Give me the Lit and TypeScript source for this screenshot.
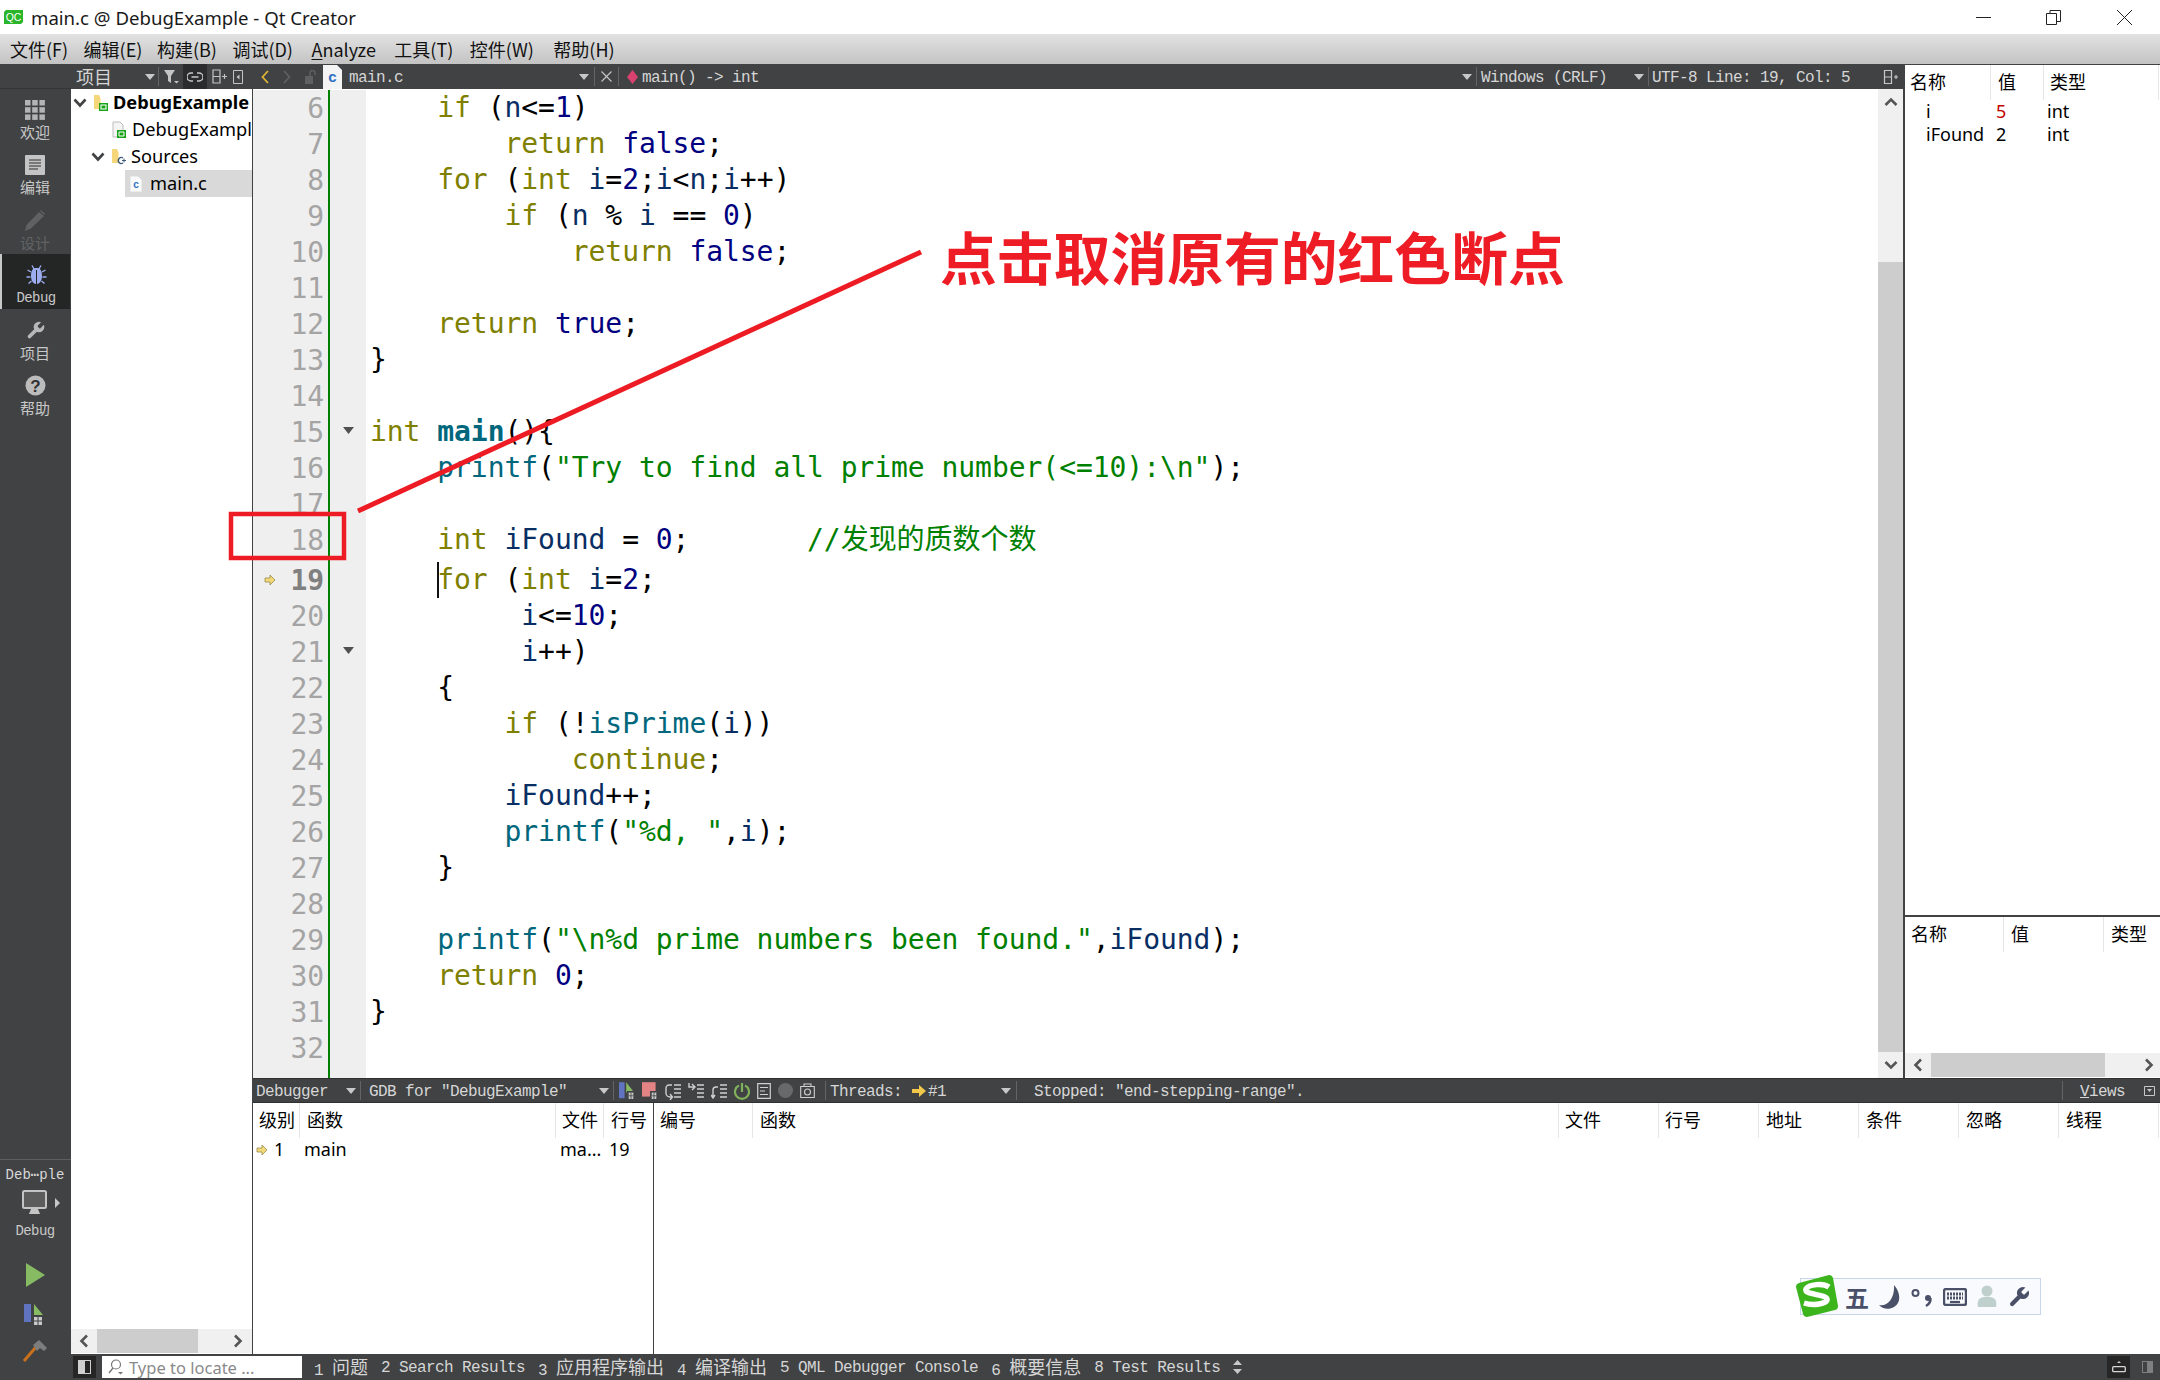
import { LitElement, html, svg, css } from "lit";
import { customElement } from "lit/decorators.js";

const CODE: [number, string][] = [
  [6, "    {k|if} ({v|n}<={n|1})"],
  [7, "        {k|return} {n|false};"],
  [8, "    {k|for} ({k|int} {v|i}={n|2};{v|i}<{v|n};{v|i}++)"],
  [9, "        {k|if} ({v|n} % {v|i} == {n|0})"],
  [10, "            {k|return} {n|false};"],
  [11, ""],
  [12, "    {k|return} {n|true};"],
  [13, "}"],
  [14, ""],
  [15, "{k|int} {b|main}(){"],
  [16, "    {f|printf}({s|\"Try to find all prime number(<=10):\\n\"});"],
  [17, ""],
  [18, "    {k|int} {v|iFound} = {n|0};       {s|//发现的质数个数}"],
  [19, "    {k|for} ({k|int} {v|i}={n|2};"],
  [20, "         {v|i}<={n|10};"],
  [21, "         {v|i}++)"],
  [22, "    {"],
  [23, "        {k|if} (!{f|isPrime}({v|i}))"],
  [24, "            {k|continue};"],
  [25, "        {v|iFound}++;"],
  [26, "        {f|printf}({s|\"%d, \"},{v|i});"],
  [27, "    }"],
  [28, ""],
  [29, "    {f|printf}({s|\"\\n%d prime numbers been found.\"},{v|iFound});"],
  [30, "    {k|return} {n|0};"],
  [31, "}"],
  [32, ""],
];

const tokens = (src: string) => {
  const out: unknown[] = [];
  const re = /\{(\w)\|([^}]*)\}/g;
  let last = 0;
  let m: RegExpExecArray | null;
  while ((m = re.exec(src))) {
    if (m.index > last) out.push(src.slice(last, m.index));
    out.push(html`<span class="t-${m[1]}">${m[2]}</span>`);
    last = m.index + m[0].length;
  }
  if (last < src.length) out.push(src.slice(last));
  return out;
};

/* Mixed Latin / CJK label: the CJK runs are set larger than the Latin ones. */
const ui = (text: string) =>
  text.split(/([\u3400-\u9fff]+)/).map((part, i) => (i % 2 ? html`<span class="cjk">${part}</span>` : part));

const ddArrow = html`<svg class="dd" width="10" height="6" viewBox="0 0 10 6"><path d="M0 0h10L5 6z" fill="#c8c8c8"/></svg>`;
const chevDown = html`<svg class="chev" width="14" height="10" viewBox="0 0 14 10"><path d="M1.5 1.5 7 7.5l5.5-6" fill="none" stroke="#404244" stroke-width="2.6"/></svg>`;
const splitIcon = html`<svg width="16" height="16" viewBox="0 0 16 16"><path d="M1.5 1.5h7v13h-7zM1.5 8h7M11 8h4M13 6v4" fill="none" stroke="#c8c8c8" stroke-width="1.2"/></svg>`;
const arrowL = html`<svg width="10" height="14" viewBox="0 0 10 14"><path d="M8 1.5 2.5 7 8 12.5" fill="none" stroke="#555" stroke-width="2.6"/></svg>`;
const arrowR = html`<svg width="10" height="14" viewBox="0 0 10 14"><path d="M2 1.5 7.5 7 2 12.5" fill="none" stroke="#555" stroke-width="2.6"/></svg>`;
const yellowArrow = html`<svg width="12" height="12" viewBox="0 0 12 12"><path d="M1 4h5V1l5 5-5 5V8H1z" fill="#f2d878" stroke="#9a8a4a" stroke-width=".8"/></svg>`;
const bugMini = svg`<path d="M10 11h10v11H10z" fill="#404244"/><path d="M12 13h6v8h-6z" fill="#c9c9c9"/><path d="M15 13v8M10 14l2 1.500M20 14l-2 1.500M10 21l2-1.500M20 21l-2-1.500M12 17h6" stroke="#404244" stroke-width="1"/>`;

@customElement("app-root")
export class AppRoot extends LitElement {
  static styles = css`
    :host {
      display: block;
      position: relative;
      width: 2160px;
      height: 1380px;
      overflow: hidden;
      background: #fff;
      font-family: "Noto Sans", "Noto Sans CJK SC", sans-serif;
      color: #000;
    }
    .app { display: flex; flex-direction: column; height: 1380px; }
    svg { display: block; flex: none; }

    /* title + menu */
    .title { height: 34px; flex: none; display: flex; align-items: center; background: #fff; font-size: 18.600px; color: #1a1a1a; }
    .title .qc { margin: 0 8px 0 4px; }
    .title .grow { flex: 1; }
    .title .win { width: 70px; display: flex; justify-content: center; }
    .title .win.last { width: 72px; }
    .menu {
      height: 30px; flex: none; display: flex; align-items: center; padding-left: 10px;
      background: linear-gradient(#e2e2e2, #c3c3c3);
      font-family: "Noto Sans CJK SC", "Noto Sans", sans-serif; font-size: 18px; color: #111;
    }
    .menu span { margin-right: 16.500px; }
    .menu span:nth-child(1) { margin-right: 15.500px; }
    .menu span:nth-child(2) { margin-right: 14.500px; }
    .menu span:nth-child(3) { margin-right: 15.500px; }
    .menu span:nth-child(4) { margin-right: 18.500px; }
    .menu span:nth-child(5) { margin-right: 18.500px; }
    .menu span:nth-child(7) { margin-right: 19.500px; }
    .menu u { text-underline-offset: 2px; }

    .body { flex: 1; display: flex; min-height: 0; }

    /* left mode bar */
    .nav {
      width: 71px; flex: none; background: #404244; display: flex; flex-direction: column;
      color: #c8c8c8; font-family: "Noto Sans CJK SC", sans-serif; font-size: 15px;
    }
    .nav-head { height: 24px; flex: none; border-bottom: 1px solid #323436; }
    .mode { height: 55px; flex: none; display: flex; flex-direction: column; align-items: center; padding: 11px 1px 0 0; box-sizing: border-box; gap: 1px; line-height: 21px; }
    .mode.active { background: #242626; border-left: 2px solid #c8c8c8; border-right: 1px solid #404244; padding-right: 0; gap: 3px; }
    .mode.off { color: #606264; }
    .mono-l { font-family: "Liberation Mono", monospace; font-size: 14px; letter-spacing: -0.6px; }
    .grow { flex: 1; }
    .kit { height: 221px; flex: none; border-top: 1px solid #5c5e60; display: flex; flex-direction: column; align-items: center; box-sizing: border-box; padding-right: 1px; }
    .kit-name { margin-top: 6px; line-height: 18px; color: #d8d8d8; letter-spacing: 0; }
    .kit-mon { display: flex; align-items: center; margin-top: 6px; padding-left: 11px; gap: 8px; }
    .kit-label { margin-top: 7px; line-height: 18px; }
    .kit-play { margin-top: 23px; }
    .kit-dbg { margin-top: 16px; }
    .kit-ham { margin-top: 14px; }

    .content { flex: 1; min-width: 0; display: flex; flex-direction: column; }
    .work { flex: 1; display: flex; min-height: 0; }

    /* shared toolbars */
    .bar {
      display: flex; align-items: center; flex: none; height: 25px; background: #404244; color: #d6d6d6;
      font-family: "Liberation Mono", monospace; font-size: 16px; letter-spacing: -0.6px; white-space: pre;
    }
    .bar > span, .seg > span { padding-top: 2px; }
    .cjk { font-family: "Noto Sans CJK SC", sans-serif; font-size: 18px; letter-spacing: 0; vertical-align: 1px; line-height: 20px; }
    .seg > .cjk { padding-top: 0; margin-bottom: 2px; }
    .sep { width: 1px; height: 19px; background: #626466; flex: none; }
    .seg { display: flex; align-items: center; height: 100%; box-sizing: border-box; flex: none; }
    .seg .dd { margin-left: auto; }

    /* project tree */
    .tree-col { width: 182px; flex: none; display: flex; flex-direction: column; border-right: 1px solid #404244; box-sizing: border-box; }
    .tree-head { padding-left: 5px; }
    .tree-head .s1 { width: 82px; padding-right: 3px; }
    .tree-head .f { margin-left: 5px; }
    .tree-head .link { width: 24px; height: 25px; margin-left: 4px; background: #2b2c2e; display: flex; align-items: center; justify-content: center; }
    .tree-head .sp { margin-left: 5px; }
    .tree-head .cl { margin-left: 6px; }
    .tree { flex: 1; font-size: 18.200px; line-height: 27px; overflow: hidden; white-space: nowrap; }
    .node { height: 27px; display: flex; align-items: center; overflow: hidden; }
    .node.l0 { padding-left: 2px; font-weight: 700; }
    .node.l1 { padding-left: 41px; }
    .node.l1b { padding-left: 20px; }
    .node.sel { margin-left: 54px; padding-left: 5px; background: #d9d9d9; }
    .node.sel .ico { margin-right: 8px; }
    .node .ico { margin-right: 5px; }
    .node .chev { margin-right: 6px; }

    .hbar { height: 24px; flex: none; background: #f0f0f0; display: flex; align-items: center; margin-bottom: 1px; }
    .hbar .btn { flex: none; display: flex; align-items: center; justify-content: center; height: 100%; }
    .hbar .thumb { flex: none; height: 100%; background: #cdcdcd; }
    .hbar .end { flex: 1; display: flex; justify-content: flex-end; }
    .tree-sb .btn { width: 26px; }
    .tree-sb .thumb { width: 101px; }
    .tree-sb .end { padding-right: 9px; }

    /* editor */
    .main { flex: 1; min-width: 0; display: flex; flex-direction: column; }
    .upper { height: 1014px; flex: none; display: flex; }
    .editor { width: 1650px; flex: none; display: flex; flex-direction: column; }
    .ed-bar .doc { width: 341px; padding: 0 5px 0 8px; }
    .ed-bar .next { margin-left: 14px; }
    .ed-bar .lock { margin-left: 14px; }
    .ed-bar .file { margin-left: 6px; }
    .ed-bar .name { margin-left: 7px; }
    .ed-bar .x { width: 23px; justify-content: center; }
    .ed-bar .sym { width: 857px; padding: 0 4px 0 8px; }
    .ed-bar .sym .txt { margin-left: 4px; }
    .ed-bar .eol { width: 171px; padding: 0 4px 0 4px; }
    .ed-bar .enc { flex: 1; padding: 0 4px 0 3px; }
    .ed-bar .enc svg { margin-left: auto; }
    .ed-body { flex: 1; display: flex; min-height: 0; }
    .lines {
      flex: 1; min-width: 0; display: flex; flex-direction: column; overflow: hidden; padding-top: 1px;
      font-family: "DejaVu Sans Mono", "Noto Sans CJK SC", monospace; font-size: 28px; letter-spacing: -0.05px;
    }
    .line { height: 36px; flex: none; display: flex; align-items: center; white-space: pre; }
    .line.tall { height: 40px; }
    .line.tall .src { margin-bottom: 4px; }
    .line.tall .gut .num { margin-bottom: 4px; }
    .line.filler { flex: 1; height: auto; align-items: stretch; }
    .gut { width: 75px; height: 100%; flex: none; display: flex; align-items: center; background: #efefef; box-sizing: border-box; padding: 0 4px 0 11px; color: #a4a4a4; }
    .gut .mark { width: 12px; flex: none; }
    .gut .num { flex: 1; text-align: right; }
    .gut.cur { color: #808080; font-weight: 700; }
    .green { width: 2px; height: 100%; flex: none; background: #008000; }
    .fold { width: 36px; height: 100%; flex: none; background: #efefef; display: flex; align-items: center; justify-content: center; }
    .fold svg { margin-top: -4px; }
    .src { padding-left: 4px; position: relative; line-height: 36px; height: 36px; }
    .caret { position: absolute; left: 71px; top: 0; width: 2px; height: 36px; background: #111; }
    .t-k { color: #808000; }
    .t-v { color: #092e64; }
    .t-n { color: #000080; }
    .t-s { color: #008000; }
    .t-f { color: #00677c; }
    .t-b { color: #00677c; font-weight: 700; }

    .vbar { width: 25px; flex: none; display: flex; flex-direction: column; background: #f0f0f0; }
    .vbar .btn { height: 26px; flex: none; display: flex; align-items: center; justify-content: center; }
    .vbar .track { height: 147px; flex: none; }
    .vbar .thumb { flex: 1; background: #cdcdcd; }

    /* right locals panel */
    .vars { flex: 1; min-width: 0; display: flex; flex-direction: column; border-left: 2px solid #404244; border-top: 1px solid #404244; box-sizing: border-box; }
    .vars .top { height: 850px; flex: none; }
    .vars .bot { flex: 1; display: flex; flex-direction: column; border-top: 2px solid #404244; }
    .vars .bot .grow { flex: 1; }
    .vars-sb .btn { width: 26px; }
    .vars-sb .thumb { width: 174px; }
    .vars-sb .end { padding-right: 6px; }

    .thead { display: flex; height: 35px; font-family: "Noto Sans CJK SC", sans-serif; font-size: 18px; line-height: 33px; }
    .th { flex: none; box-sizing: border-box; padding-left: 5px; border-right: 1px solid #e6e6e6; height: 100%; }
    .th.none { border-right: 0; }
    .row { display: flex; height: 23px; font-size: 18px; line-height: 23px; white-space: nowrap; }
    .td { flex: none; box-sizing: border-box; display: flex; align-items: center; }
    .red { color: #c00000; }
    .lvl { margin-left: 6px; }

    /* debugger pane */
    .debug { flex: 1; min-height: 0; display: flex; flex-direction: column; }
    .db-bar { border-top: 1px solid #2e2f31; border-bottom: 1px solid #2e2f31; height: 25px; box-sizing: border-box; }
    .db-bar .a { width: 107px; padding: 0 4px 0 3px; }
    .db-bar .b { width: 252px; padding: 0 4px 0 8px; }
    .db-bar .icons { width: 211px; padding-left: 5px; gap: 7px; }
    .db-bar .c { width: 190px; padding: 0 5px 0 4px; gap: 0; }
    .db-bar .c svg:first-of-type { margin: 0 2px 0 1px; }
    .db-bar .d { flex: 1; padding-left: 17px; }
    .db-bar .e { width: 97px; padding: 0 5px 0 17px; justify-content: space-between; }
    .db-body { flex: 1; display: flex; min-height: 0; }
    .stack { width: 401px; flex: none; border-right: 1px solid #404244; box-sizing: border-box; }
    .breaks { flex: 1; min-width: 0; }

    /* status */
    .status { height: 26px; flex: none; padding-left: 2px; gap: 13px; }
    .status .tg { width: 23px; height: 22px; background: #262626; display: flex; align-items: center; justify-content: center; margin-right: -7px; }
    .status .loc {
      width: 200px; height: 22px; background: #fff; color: #8a8a8a; display: flex; align-items: center; gap: 6px; padding-left: 6px; box-sizing: border-box; margin-right: -1px;
      font-family: "Noto Sans", sans-serif; font-size: 16.500px; letter-spacing: 0;
    }
    .status .rt { margin-left: auto; display: flex; align-items: center; gap: 12px; padding-right: 7px; }
    .status .box { width: 23px; height: 22px; background: #262626; display: flex; align-items: center; justify-content: center; }

    /* annotation & IME overlay */
    .over { position: absolute; left: 0; top: 0; pointer-events: none; }
    .callout {
      position: absolute; left: 940px; top: 218px; line-height: 74px; white-space: nowrap;
      font-family: "Noto Sans CJK SC", sans-serif; font-weight: 700; font-size: 56.800px; color: #ee1c25;
    }
    .ime {
      position: absolute; left: 1800px; top: 1278px; width: 241px; height: 37px; box-sizing: border-box;
      background: #f8fafd; border: 1.500px solid #c8d6e8; display: flex; align-items: center; gap: 10px; padding-left: 44px;
      font-family: "Noto Sans CJK SC", sans-serif; font-size: 24px; font-weight: 700; color: #4b5069;
    }
    .ime .logo { position: absolute; left: -6px; top: -5px; }
    .ime .ch { width: 24px; line-height: 30px; text-align: center; }
  `;

  private table(cols: [string, number, number][]) {
    return html`<div class="thead">
      ${cols.map(
        ([t, w, p], i) => html`<div class="th ${i === cols.length - 1 && w < 100 ? "none" : ""}" style="width:${w}px;padding-left:${p}px">${t}</div>`
      )}
    </div>`;
  }

  private cells(cols: [unknown, number, number][], cls = "") {
    return html`<div class="row ${cls}">
      ${cols.map(([t, w, p]) => html`<div class="td" style="width:${w}px;padding-left:${p}px">${t}</div>`)}
    </div>`;
  }

  private folder(kind: "qt" | "cpp") {
    return html`<svg class="ico" width="15" height="18" viewBox="0 0 15 18">
      <path d="M1 1h5l1 2v12H1z" fill="#f6d67a"/>
      <path d="M7 4h1v11H7z" fill="#fbeab5"/>
      ${kind === "qt"
        ? svg`<rect x="6" y="9" width="9" height="8" fill="#19a319"/><path d="M8 11h5v4H8z" fill="none" stroke="#fff" stroke-width="1.100"/>`
        : svg`<path d="M12 10a3 3 0 1 0 0 5" fill="none" stroke="#3c5a78" stroke-width="1.400"/><path d="M11 12.500h4M13 10.500v4" stroke="#3c5a78"/>`}
    </svg>`;
  }

  private renderNav() {
    return html`<nav class="nav">
      <div class="nav-head"></div>
      <div class="mode">
        <svg width="20" height="20" viewBox="0 0 20 20" fill="#b4b4b4">
          <rect width="5.500" height="5.500"/><rect x="7.200" width="5.500" height="5.500"/><rect x="14.400" width="5.500" height="5.500"/>
          <rect y="7.200" width="5.500" height="5.500"/><rect x="7.200" y="7.200" width="5.500" height="5.500"/><rect x="14.400" y="7.200" width="5.500" height="5.500"/>
          <rect y="14.400" width="5.500" height="5.500"/><rect x="7.200" y="14.400" width="5.500" height="5.500"/><rect x="14.400" y="14.400" width="5.500" height="5.500"/>
        </svg>
        <span>欢迎</span>
      </div>
      <div class="mode">
        <svg width="20" height="20" viewBox="0 0 20 20"><rect width="20" height="20" rx="1" fill="#c4c4c4"/><path d="M4 5h12M4 8h12M4 11h12M4 14h9" stroke="#2e2e2e" stroke-width="1.200"/></svg>
        <span>编辑</span>
      </div>
      <div class="mode off">
        <svg width="20" height="21" viewBox="0 0 20 21"><path d="M0 21l1.500-6L14 2l5 4L6 18.500z" fill="#5f6163"/><path d="M15 1l1-1 4 4-1 1z" fill="#5f6163"/></svg>
        <span>设计</span>
      </div>
      <div class="mode active">
        <svg width="21" height="20" viewBox="0 0 21 20">
          <path d="M10 3C6 3 5 7 5 11s2 8 5 8zM11 3c4 0 5 4 5 8s-2 8-5 8z" fill="#9dacee"/>
          <path d="M7.500 3 6 .5M13.500 3 15 .5M5 7 1.500 5M16 7l3.500-2M4.500 12H.5M16.500 12h4M5.500 16l-3 2.500M15.500 16l3 2.500" stroke="#9dacee" stroke-width="1.400" fill="none"/>
          <path d="M7 3h7v2H7z" fill="#9dacee"/>
        </svg>
        <span class="mono-l">Debug</span>
      </div>
      <div class="mode">
        <svg width="21" height="21" viewBox="0 0 24 24"><path fill="#b8b8b8" d="M14.700 6.300a1 1 0 0 0 0 1.400l1.600 1.600a1 1 0 0 0 1.400 0l3.770-3.770a6 6 0 0 1-7.940 7.940l-6.910 6.910a2.120 2.120 0 0 1-3-3l6.910-6.910a6 6 0 0 1 7.940-7.940l-3.760 3.760z"/></svg>
        <span>项目</span>
      </div>
      <div class="mode">
        <svg width="21" height="21" viewBox="0 0 21 21"><circle cx="10.500" cy="10.500" r="10" fill="#bcbcbc"/><text x="10.500" y="16.500" text-anchor="middle" font-family="Liberation Sans" font-weight="700" font-size="17" fill="#333">?</text></svg>
        <span>帮助</span>
      </div>
      <div class="grow"></div>
      <div class="kit">
        <div class="kit-name mono-l">Deb⋯ple</div>
        <div class="kit-mon">
          <svg width="25" height="25" viewBox="0 0 25 25"><rect x="1" y="1" width="23" height="17" rx="1.500" fill="#5c5c5c" stroke="#c4c4c4" stroke-width="2"/><path d="M9 19h7l2 5H7z" fill="#c4c4c4"/></svg>
          <svg width="5" height="10" viewBox="0 0 5 10"><path d="M0 0l5 5-5 5z" fill="#c8c8c8"/></svg>
        </div>
        <div class="kit-label mono-l">Debug</div>
        <svg class="kit-play" width="19" height="24" viewBox="0 0 19 24"><path d="M0 0l19 12L0 24z" fill="#86bb63"/></svg>
        <svg class="kit-dbg" width="22" height="23" viewBox="0 0 22 23">
          <rect x="0" y="1" width="7" height="18" fill="#5f73c0"/><path d="M10 1l9 11h-9z" fill="#86bb63"/>
          <path d="M8 13h12v9H8z" fill="#404244"/><path d="M10 14h8v8h-8z" fill="#c9c9c9"/><path d="M14 14v8M10 18h8M8 14l2 2M20 14l-2 2M8 22l2-2M20 22l-2-2" stroke="#404244" stroke-width="1" fill="none"/>
        </svg>
        <svg class="kit-ham" width="24" height="22" viewBox="0 0 24 22"><path d="M1 21 13 7" stroke="#c9701c" stroke-width="3"/><path d="M10 5l6-5 8 8-3 3-4-3-3 3z" fill="#7d7d7d"/></svg>
      </div>
    </nav>`;
  }

  private renderTree() {
    return html`<aside class="tree-col">
      <div class="bar tree-head">
        <div class="seg s1"><span class="cjk">项目</span>${ddArrow}</div>
        <div class="sep"></div>
        <svg class="f" width="15" height="15" viewBox="0 0 15 15"><path d="M0 1h11L7 7v7L4 12V7z" fill="#c4c4c4"/><path d="M10 12h5l-2.500 2.500z" fill="#c4c4c4"/></svg>
        <div class="link">
          <svg width="16" height="10" viewBox="0 0 16 10"><path d="M6 1H4a4 4 0 0 0 0 8h2M10 1h2a4 4 0 0 1 0 8h-2M4.500 5h7" fill="none" stroke="#c8c8c8" stroke-width="1.400"/></svg>
        </div>
        <svg class="sp" width="15" height="15" viewBox="0 0 15 15"><path d="M1 1h7v13H1zM1 7.500h7M10 7.500h5M12.500 5v5" fill="none" stroke="#c4c4c4" stroke-width="1.200"/></svg>
        <svg class="cl" width="10" height="14" viewBox="0 0 10 14"><path d="M.5.500h9v13h-9z" fill="none" stroke="#c4c4c4"/><path d="M6.500 4.500v5L3.500 7z" fill="#c4c4c4"/></svg>
      </div>
      <div class="tree">
        <div class="node l0">${chevDown}${this.folder("qt")}<span>DebugExample</span></div>
        <div class="node l1">
          <svg class="ico" width="15" height="18" viewBox="0 0 15 18"><path d="M1 1h7l3 3v12H1z" fill="#f4f4f4" stroke="#bdbdbd"/><rect x="5" y="9" width="9" height="8" fill="#19a319"/><path d="M7 11h5v4H7z" fill="none" stroke="#fff"/></svg>
          <span>DebugExampl</span>
        </div>
        <div class="node l1b">${chevDown}${this.folder("cpp")}<span>Sources</span></div>
        <div class="node sel">
          <svg class="ico" width="12" height="18" viewBox="0 0 12 18"><path d="M0 1h8l4 4v12H0z" fill="#fbfbfb" stroke="#dcdcdc"/><text x="6" y="13" text-anchor="middle" font-family="Liberation Sans" font-size="10" font-weight="700" fill="#2f72c4">c</text></svg>
          <span>main.c</span>
        </div>
      </div>
      <div class="hbar tree-sb">
        <div class="btn">${arrowL}</div>
        <div class="thumb"></div>
        <div class="end">${arrowR}</div>
      </div>
    </aside>`;
  }

  private renderEditor() {
    return html`<section class="editor">
      <div class="bar ed-bar">
        <div class="seg doc">
          <svg width="8" height="14" viewBox="0 0 8 14"><path d="M7 1 1.500 7 7 13" fill="none" stroke="#e0b434" stroke-width="1.800"/></svg>
          <svg class="next" width="8" height="14" viewBox="0 0 8 14"><path d="M1 1l5.500 6L1 13" fill="none" stroke="#5e6062" stroke-width="1.800"/></svg>
          <svg class="lock" width="12" height="14" viewBox="0 0 12 14"><path d="M0 6h8v8H0z" fill="#5e6062"/><path d="M5 6V3a2.500 2.500 0 0 1 5 0v2" fill="none" stroke="#5e6062" stroke-width="1.500"/></svg>
          <svg class="file" width="19" height="24" viewBox="0 0 19 24"><path d="M0 0h14l5 5v19H0z" fill="#f4f4f4"/><text x="9" y="17" text-anchor="middle" font-family="Liberation Sans" font-size="15" font-weight="700" fill="#2f72c4">c</text></svg>
          <span class="name">main.c</span>
          ${ddArrow}
        </div>
        <div class="sep"></div>
        <div class="seg x"><svg width="11" height="11" viewBox="0 0 11 11"><path d="M.5.500l10 10M10.500.500l-10 10" stroke="#c8c8c8" stroke-width="1.100"/></svg></div>
        <div class="sep"></div>
        <div class="seg sym">
          <svg width="11" height="14" viewBox="0 0 11 14"><path d="M5.500 0 11 7l-5.500 7L0 7z" fill="#d9426f"/></svg>
          <span class="txt">main() -&gt; int</span>
          ${ddArrow}
        </div>
        <div class="sep"></div>
        <div class="seg eol"><span>Windows (CRLF)</span>${ddArrow}</div>
        <div class="sep"></div>
        <div class="seg enc"><span>UTF-8 Line: 19, Col: 5</span>${splitIcon}</div>
      </div>
      <div class="ed-body">
        <div class="lines">
          ${CODE.map(
            ([n, src]) => html`<div class="line ${n === 18 ? "tall" : ""}">
              <div class="gut ${n === 19 ? "cur" : ""}">
                <span class="mark">${n === 19 ? yellowArrow : ""}</span>
                <span class="num">${n}</span>
              </div>
              <div class="green"></div>
              <div class="fold">
                ${n === 15 || n === 21
                  ? html`<svg width="11" height="7" viewBox="0 0 11 7"><path d="M0 0h11L5.500 7z" fill="#505050"/></svg>`
                  : ""}
              </div>
              <div class="src">${n === 19 ? html`<i class="caret"></i>` : ""}${tokens(src)}</div>
            </div>`
          )}
          <div class="line filler"><div class="gut"></div><div class="green"></div><div class="fold"></div></div>
        </div>
        <div class="vbar">
          <div class="btn"><svg width="14" height="10" viewBox="0 0 14 10"><path d="M1.500 8 7 2.500 12.500 8" fill="none" stroke="#555" stroke-width="2.600"/></svg></div>
          <div class="track"></div>
          <div class="thumb"></div>
          <div class="btn"><svg width="14" height="10" viewBox="0 0 14 10"><path d="M1.500 2 7 7.500 12.500 2" fill="none" stroke="#555" stroke-width="2.600"/></svg></div>
        </div>
      </div>
    </section>`;
  }

  private renderVars() {
    return html`<section class="vars">
      <div class="top">
        ${this.table([["名称", 86, 5], ["值", 53, 7], ["类型", 115, 6]])}
        ${this.cells([["i", 86, 21], [html`<span class="red">5</span>`, 53, 5], ["int", 115, 3]])}
        ${this.cells([["iFound", 86, 21], ["2", 53, 5], ["int", 115, 3]])}
      </div>
      <div class="bot">
        ${this.table([["名称", 99, 6], ["值", 100, 7], ["类型", 55, 7]])}
        <div class="grow"></div>
        <div class="hbar vars-sb">
          <div class="btn">${arrowL}</div>
          <div class="thumb"></div>
          <div class="end">${arrowR}</div>
        </div>
      </div>
    </section>`;
  }

  private renderDebug() {
    return html`<section class="debug">
      <div class="bar db-bar">
        <div class="seg a"><span>Debugger</span>${ddArrow}</div>
        <div class="sep"></div>
        <div class="seg b"><span>GDB for "DebugExample"</span>${ddArrow}</div>
        <div class="sep"></div>
        <div class="seg icons">
          <svg width="16" height="18" viewBox="0 0 20 22"><rect y="0" width="7" height="20" fill="#5f73c0"/><path d="M9 0l10 13H9z" fill="#86bb63"/>${bugMini}</svg>
          <svg width="16" height="18" viewBox="0 0 20 22"><rect width="17" height="18" fill="#e58484"/>${bugMini}</svg>
          <svg width="16" height="18" viewBox="0 0 16 18"><path d="M7 3H4a3 3 0 0 0-3 3v5a4 4 0 0 0 4 4h2M5 12l2.500 3L5 18M9 3h7M9 7h7M9 11h7M9 15h7" fill="none" stroke="#cfcfcf" stroke-width="1.400"/></svg>
          <svg width="16" height="18" viewBox="0 0 16 18"><path d="M1 1v4h5M4 2l3 3-3 3M9 3h7M9 7h7M9 11h7M9 15h7" fill="none" stroke="#cfcfcf" stroke-width="1.400"/></svg>
          <svg width="16" height="18" viewBox="0 0 16 18"><path d="M7 5H5a3 3 0 0 0-3 3v8M0 13l2 3 2-3M9 3h7M9 7h7M9 11h7M9 15h7" fill="none" stroke="#cfcfcf" stroke-width="1.400"/></svg>
          <svg width="16" height="18" viewBox="0 0 16 18"><path d="M5 3.500a7 7 0 1 0 6 0" fill="none" stroke="#7fb25a" stroke-width="2.200"/><path d="M8 1v9" stroke="#7fb25a" stroke-width="2.200"/></svg>
          <svg width="14" height="16" viewBox="0 0 14 16"><path d="M.7.700h12.600v14.600H.7zM3 4.500h8M3 8h5M3 11.500h8" fill="none" stroke="#cfcfcf" stroke-width="1.200"/></svg>
          <svg width="15" height="15" viewBox="0 0 15 15"><circle cx="7.500" cy="7.500" r="7.500" fill="#68696b"/></svg>
          <svg width="15" height="15" viewBox="0 0 15 15"><path d="M.7 3.500h13.600v11H.7zM4 3.500V1h7v2.500" fill="none" stroke="#cfcfcf" stroke-width="1.100"/><circle cx="7.500" cy="9" r="3" fill="none" stroke="#cfcfcf" stroke-width="1.100"/></svg>
        </div>
        <div class="sep"></div>
        <div class="seg c"><span>Threads: </span><svg width="14" height="12" viewBox="0 0 14 12"><path d="M0 4h7V0l7 6-7 6V8H0z" fill="#f2c84b"/></svg><span>#1</span>${ddArrow}</div>
        <div class="sep"></div>
        <div class="seg d"><span>Stopped: "end-stepping-range".</span></div>
        <div class="sep"></div>
        <div class="seg e">
          <span><u>V</u>iews</span>
          <svg width="11" height="10" viewBox="0 0 11 10"><path d="M.5.500h10v9H.5z" fill="none" stroke="#c8c8c8"/><path d="M3 3h5L5.500 6z" fill="#c8c8c8"/></svg>
        </div>
      </div>
      <div class="db-body">
        <div class="stack">
          ${this.table([["级别", 47, 6], ["函数", 256, 7], ["文件", 48, 6], ["行号", 49, 7]])}
          ${this.cells([
            [html`${yellowArrow}<span class="lvl">1</span>`, 47, 3],
            ["main", 256, 4],
            ["ma...", 48, 4],
            ["19", 49, 5],
          ])}
        </div>
        <div class="breaks">
          ${this.table([
            ["编号", 99, 6],
            ["函数", 806, 7],
            ["文件", 100, 6],
            ["行号", 100, 6],
            ["地址", 100, 7],
            ["条件", 100, 7],
            ["忽略", 100, 7],
            ["线程", 100, 7],
          ])}
        </div>
      </div>
    </section>`;
  }

  private renderStatus() {
    return html`<footer class="bar status">
      <div class="tg"><svg width="13" height="14" viewBox="0 0 13 14"><rect x=".5" y=".5" width="12" height="13" fill="none" stroke="#d0d0d0"/><rect x="1" y="1" width="6" height="12" fill="#d0d0d0"/></svg></div>
      <div class="loc">
        <svg width="15" height="16" viewBox="0 0 15 16"><circle cx="8" cy="5.500" r="4.500" fill="none" stroke="#777" stroke-width="1.200"/><path d="M5 9l-4 5" stroke="#777" stroke-width="1.400"/><path d="M10 13h5l-2.500 2.500z" fill="#777"/></svg>
        <span>Type to locate ...</span>
      </div>
      <span>${ui("1 问题")}</span>
      <span>2 Search Results</span>
      <span>${ui("3 应用程序输出")}</span>
      <span>${ui("4 编译输出")}</span>
      <span>5 QML Debugger Console</span>
      <span>${ui("6 概要信息")}</span>
      <span>8 Test Results</span>
      <svg width="9" height="14" viewBox="0 0 9 14"><path d="M4.500 0 9 5H0zM4.500 14 0 9h9z" fill="#c8c8c8"/></svg>
      <div class="rt">
        <div class="box"><svg width="14" height="12" viewBox="0 0 14 12"><path d="M7 0l2 2H5z" fill="#c8c8c8"/><rect x=".7" y="5.700" width="12.600" height="5" rx="1" fill="none" stroke="#d8d8d8" stroke-width="1.300"/></svg></div>
        <svg width="11" height="12" viewBox="0 0 11 12"><rect x=".5" y=".5" width="10" height="11" fill="none" stroke="#808080"/><rect x="5" y="1" width="5" height="10" fill="#808080"/></svg>
      </div>
    </footer>`;
  }

  render() {
    return html`<div class="app">
        <header class="title">
          <svg class="qc" width="19" height="14" viewBox="0 0 19 14"><path d="M0 2l2-2h17v12l-2 2H0z" fill="#2ab52a"/><text x="9.500" y="11" text-anchor="middle" font-family="Liberation Sans" font-size="10.500" fill="#fff">QC</text></svg>
          <span>main.c @ DebugExample - Qt Creator</span>
          <span class="grow"></span>
          <div class="win"><svg width="15" height="15" viewBox="0 0 15 15"><path d="M0 7.500h15" stroke="#222"/></svg></div>
          <div class="win"><svg width="15" height="15" viewBox="0 0 15 15"><path d="M.5 3.500h10v11H.5zM4 3.500V.5h10.500v11h-4" fill="none" stroke="#222"/></svg></div>
          <div class="win last"><svg width="15" height="15" viewBox="0 0 15 15"><path d="M0 0l15 15M15 0 0 15" stroke="#222"/></svg></div>
        </header>
        <div class="menu">
          <span>文件(F)</span><span>编辑(E)</span><span>构建(B)</span><span>调试(D)</span>
          <span><u>A</u>nalyze</span><span>工具(T)</span><span>控件(W)</span><span>帮助(H)</span>
        </div>
        <div class="body">
          ${this.renderNav()}
          <div class="content">
            <div class="work">
              ${this.renderTree()}
              <div class="main">
                <div class="upper">${this.renderEditor()} ${this.renderVars()}</div>
                ${this.renderDebug()}
              </div>
            </div>
            ${this.renderStatus()}
          </div>
        </div>
      </div>
      <svg class="over" width="2160" height="1380" viewBox="0 0 2160 1380">
        <path d="M358 511 921 252" stroke="#ed1c24" stroke-width="5" fill="none"/>
        <rect x="231" y="514" width="113" height="44" stroke="#ed1c24" stroke-width="4.500" fill="none"/>
      </svg>
      <div class="callout">点击取消原有的红色断点</div>
      <div class="ime">
        <svg class="logo" width="44" height="44" viewBox="0 0 44 44">
          <path d="M4 9 34 1q3 0 4 3l5 28q0 3-3 4L12 43q-3 0-4-3L1 13q0-3 3-4z" fill="#3cb41c"/>
          <path d="M34 13C28 9 14 10 11 15c-3 6 20 5 21 10 1 5-14 7-23 4" fill="none" stroke="#fff" stroke-width="5.500"/>
        </svg>
        <span class="ch">五</span>
        <svg width="22" height="24" viewBox="0 0 22 24"><path d="M15 0c7 8 7 18 0 22-5 3-12 2-15-2 8 2 16-6 15-20z" fill="#4b5069"/></svg>
        <svg width="22" height="22" viewBox="0 0 22 22"><circle cx="4.500" cy="7" r="3" fill="none" stroke="#4b5069" stroke-width="2"/><circle cx="17" cy="12" r="3" fill="#4b5069"/><path d="M19.500 12q.5 5-4.500 8" fill="none" stroke="#4b5069" stroke-width="2.400"/></svg>
        <svg width="24" height="18" viewBox="0 0 24 18"><rect x="1" y="1" width="22" height="16" rx="2" fill="none" stroke="#4b5069" stroke-width="2.400"/><path d="M4 6h16M4 10h16" stroke="#4b5069" stroke-width="2.800" stroke-dasharray="2 1"/><path d="M7 14h10" stroke="#4b5069" stroke-width="2.200"/></svg>
        <svg width="20" height="24" viewBox="0 0 20 24"><circle cx="10" cy="6" r="5.500" fill="#bfd0cc"/><path d="M1 22q-2-9 6-10h6q8 1 6 10z" fill="#bfd0cc"/></svg>
        <svg width="24" height="24" viewBox="0 0 24 24"><path fill="#4b5069" d="M14.700 6.300a1 1 0 0 0 0 1.400l1.600 1.600a1 1 0 0 0 1.400 0l3.770-3.770a6 6 0 0 1-7.940 7.940l-6.910 6.910a2.120 2.120 0 0 1-3-3l6.910-6.910a6 6 0 0 1 7.940-7.940l-3.760 3.760z"/></svg>
      </div>`;
  }
}
